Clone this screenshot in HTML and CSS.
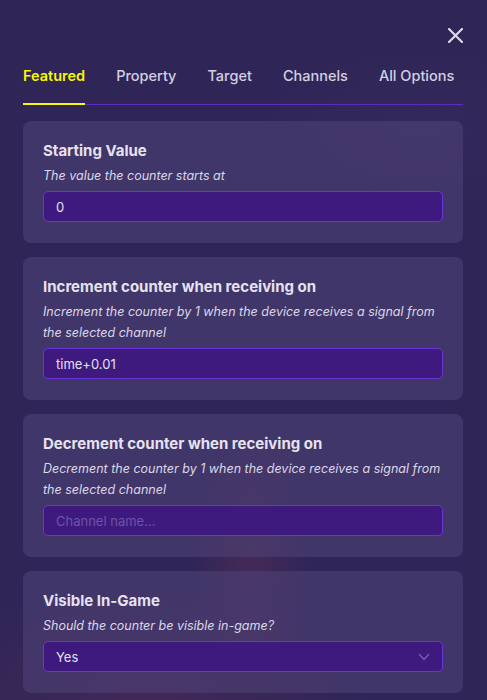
FILE: index.html
```html
<!DOCTYPE html>
<html>
<head>
<meta charset="utf-8">
<link rel="stylesheet" href="styles.css">
</head>
<body>
<div class="panel">
  <div class="close-row">
    <svg class="close" width="15" height="15" viewBox="0 0 15 15"><path d="M1 1L14 14M14 1L1 14" stroke="#dcd8e6" stroke-width="2.2" stroke-linecap="square"/></svg>
  </div>
  <div class="tabs">
    <div class="tab active">Featured</div>
    <div class="tab">Property</div>
    <div class="tab">Target</div>
    <div class="tab">Channels</div>
    <div class="tab">All Options</div>
  </div>
  <div class="card">
    <div class="title">Starting Value</div>
    <div class="desc">The value the counter starts at</div>
    <div class="field">0</div>
  </div>
  <div class="card">
    <div class="title">Increment counter when receiving on</div>
    <div class="desc">Increment the counter by 1 when the device receives a signal from the selected channel</div>
    <div class="field">time+0.01</div>
  </div>
  <div class="card">
    <div class="title">Decrement counter when receiving on</div>
    <div class="desc">Decrement the counter by 1 when the device receives a signal from the selected channel</div>
    <div class="field placeholder">Channel name...</div>
  </div>
  <div class="card">
    <div class="title">Visible In-Game</div>
    <div class="desc">Should the counter be visible in-game?</div>
    <div class="field select"><span>Yes</span>
      <svg class="chev" width="12" height="8" viewBox="0 0 12 8"><path d="M1 1L6 6.5L11 1" fill="none" stroke="#7a5cb8" stroke-width="1.3"/></svg>
    </div>
  </div>
</div>
</body>
</html>
```

FILE: styles.css
```css
html, body {
  margin: 0;
  padding: 0;
}
body {
  width: 487px;
  height: 700px;
  overflow: hidden;
  font-family: Inter, "Noto Sans", sans-serif;
  background-color: #2f2657;
  background-image:
    radial-gradient(ellipse 60px 140px at 250px 560px, rgba(120, 50, 90, 0.3), rgba(120, 50, 90, 0) 100%),
    radial-gradient(ellipse 220px 120px at 150px 700px, rgba(110, 45, 85, 0.3), rgba(110, 45, 85, 0) 100%),
    radial-gradient(ellipse 160px 80px at 420px 130px, rgba(60, 45, 100, 0.35), rgba(60, 45, 100, 0) 100%);
}
.panel {
  padding: 28px 24px 0 23px;
}
.close-row {
  display: flex;
  justify-content: flex-end;
  height: 15px;
}
.close {
  display: block;
}
.tabs {
  display: flex;
  gap: 31px;
  margin-top: 23px;
  border-bottom: 1px solid #5b2bc6;
}
.tab {
  font-size: 14.5px;
  line-height: 20px;
  font-weight: 500;
  white-space: nowrap;
  color: #d4d0e2;
  padding-bottom: 17px;
  margin-bottom: -1px;
  border-bottom: 2px solid transparent;
}
.tab.active {
  color: #f8f800;
  font-weight: 600;
  border-bottom-color: #f8f800;
}
.card {
  background: rgba(80, 68, 120, 0.55);
  border-radius: 8px;
  padding: 20px 20px 21px;
  margin-top: 14px;
}
.tabs + .card {
  margin-top: 16px;
}
.title {
  font-size: 15px;
  line-height: 20px;
  font-weight: 700;
  color: #e6e2ef;
}
.desc {
  margin-top: 4px;
  font-size: 12.5px;
  line-height: 21px;
  font-style: italic;
  color: #dcd7e8;
}
.field {
  margin-top: 5px;
  height: 29px;
  border: 1px solid #6a35d6;
  border-radius: 5px;
  background: #3e1a7f;
  padding: 0 12px;
  display: flex;
  align-items: center;
  font-size: 13px;
  color: #e4e0f0;
}
.field.placeholder {
  color: #6c52a8;
}
.field.select {
  justify-content: space-between;
}
.chev {
  display: block;
}
```
